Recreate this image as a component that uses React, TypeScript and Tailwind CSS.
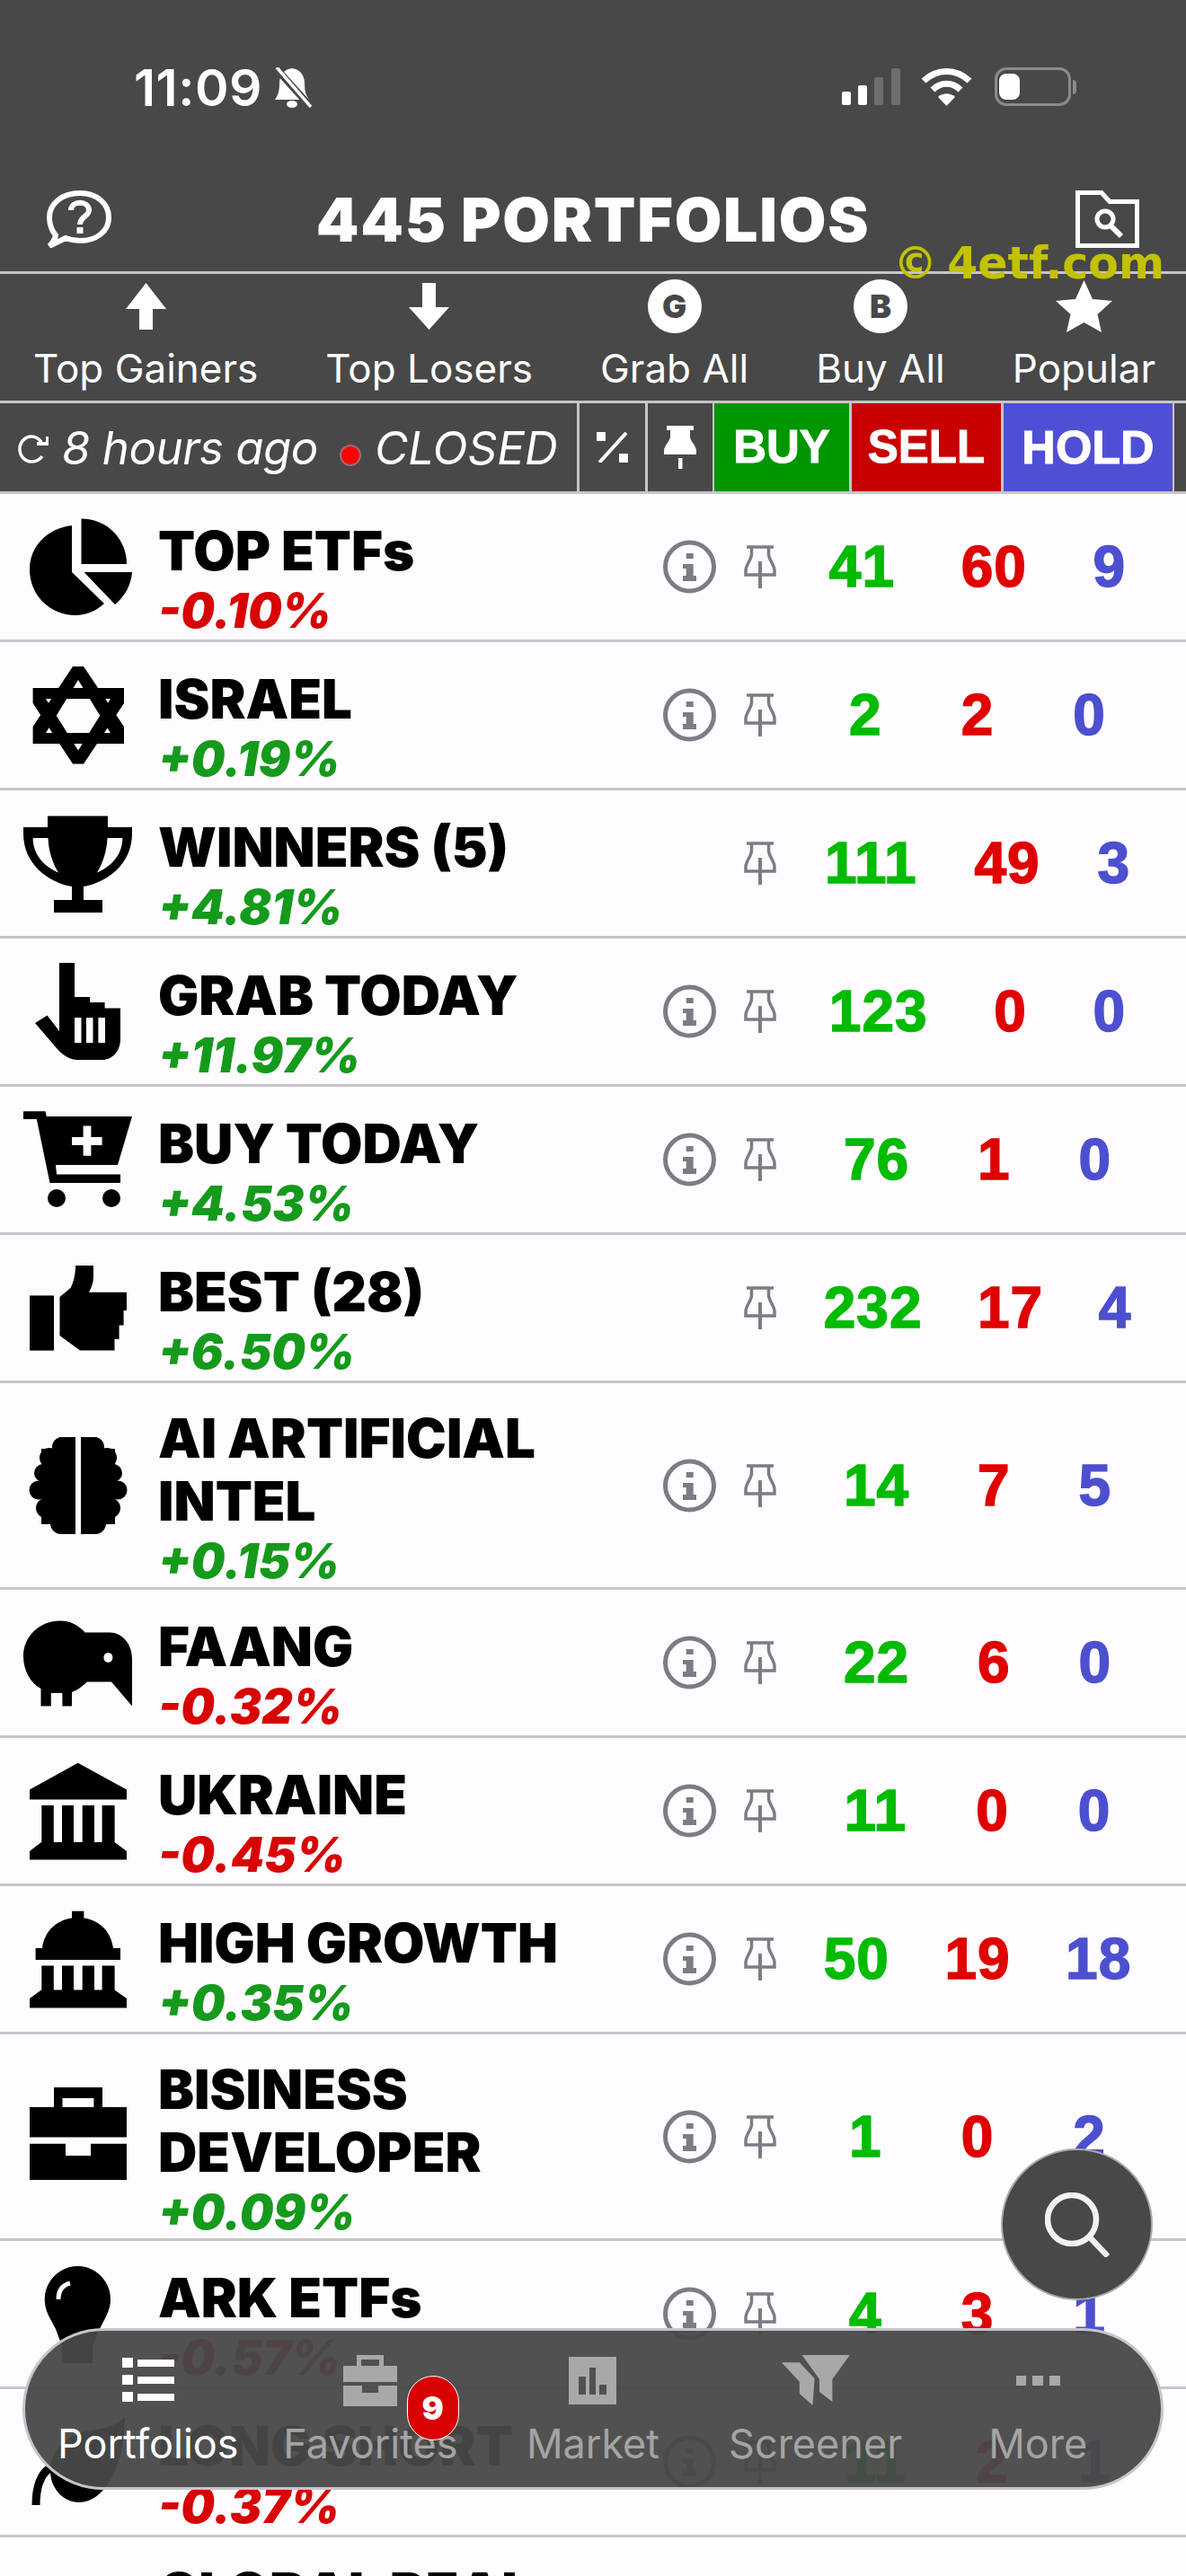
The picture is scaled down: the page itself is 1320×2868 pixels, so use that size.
import type { ReactNode } from "react";

type Row = {
  title: string;
  pct: string;
  icon: string;
  info?: boolean;
  buy: string;
  sell: string;
  hold: string;
  tall?: boolean;
};

const rows: Row[] = [
  { title: "TOP ETFs", pct: "-0.10%", icon: "pie", info: true, buy: "41", sell: "60", hold: "9" },
  { title: "ISRAEL", pct: "+0.19%", icon: "star", info: true, buy: "2", sell: "2", hold: "0" },
  { title: "WINNERS (5)", pct: "+4.81%", icon: "trophy", buy: "111", sell: "49", hold: "3" },
  { title: "GRAB TODAY", pct: "+11.97%", icon: "hand", info: true, buy: "123", sell: "0", hold: "0" },
  { title: "BUY TODAY", pct: "+4.53%", icon: "cart", info: true, buy: "76", sell: "1", hold: "0" },
  { title: "BEST (28)", pct: "+6.50%", icon: "thumb", buy: "232", sell: "17", hold: "4" },
  { title: "AI ARTIFICIAL INTEL", pct: "+0.15%", icon: "brain", info: true, buy: "14", sell: "7", hold: "5", tall: true },
  { title: "FAANG", pct: "-0.32%", icon: "kiwi", info: true, buy: "22", sell: "6", hold: "0" },
  { title: "UKRAINE", pct: "-0.45%", icon: "bank", info: true, buy: "11", sell: "0", hold: "0" },
  { title: "HIGH GROWTH", pct: "+0.35%", icon: "capitol", info: true, buy: "50", sell: "19", hold: "18" },
  { title: "BISINESS DEVELOPER", pct: "+0.09%", icon: "case", info: true, buy: "1", sell: "0", hold: "2", tall: true },
  { title: "ARK ETFs", pct: "-0.57%", icon: "balloon", info: true, buy: "4", sell: "3", hold: "1" },
  { title: "LONG SHORT", pct: "-0.37%", icon: "blob", info: true, buy: "11", sell: "2", hold: "1" },
  { title: "GLOBAL REAL ESTATE", pct: "+0.21%", icon: "none", info: true, buy: "9", sell: "3", hold: "1", tall: true },
];

function Pillars({ y, h }: { y: number; h: number }) {
  return (
    <>
      <rect x="20.3" y={y} width="13.5" height={h} />
      <rect x="43" y={y} width="13" height={h} />
      <rect x="65.7" y={y} width="13.3" height={h} />
      <rect x="87.6" y={y} width="14" height={h} />
    </>
  );
}

const icons: Record<string, ReactNode> = {
  pie: (
    <>
      <path d="M54 9C27 12 7 32 7 58C7 87 30 109 58 109C70 109 81 104 90 96L54 61Z" />
      <path d="M64.5 1.5C93 1.5 115 24 115 52L64.5 52Z" />
      <path d="M67.5 61L121 61C120 75 113 88 102 97Z" />
    </>
  ),
  star: (
    <>
      <path
        fillRule="evenodd"
        d="M55 1H67L112 68V87H10.6V68ZM61 16L25 75H97Z"
      />
      <path
        fillRule="evenodd"
        d="M55 109.5H67L112 42V25H10.6V42ZM61 94.5L25 37H97Z"
      />
    </>
  ),
  trophy: (
    <path
      fillRule="evenodd"
      d="M0 15H27V2.6H94V15H121V22C121 55 95 76 67 81V96H88V110H34V96H54V81C26 76 0 55 0 22ZM10.6 27C11 47 24 59 39 65.5C33 56 28 42 27.5 27ZM110.4 27H93.5C93 42 88 56 82 65.5C97 59 110 47 110.4 27Z"
    />
  ),
  hand: (
    <path
      fillRule="evenodd"
      d="M40 1H57V39H74V45H90.6V51.5H108V86C108 100 98 109 88 109H60C48 109 39 99 31 89L13 68L26.6 59.6L40 77ZM57 62V90H64.5V62ZM70 62V90H77.5V62ZM83.4 62V90H91V62Z"
    />
  ),
  cart: (
    <>
      <path
        fillRule="evenodd"
        d="M0 1.3H24.5L25.8 7H121L105 61H36L37 71.6H108V81H29.5L14.8 10H0ZM66.6 17.6V30H54V39H66.6V50.7H75.4V39H87.6V30H75.4V17.6Z"
      />
      <circle cx="37" cy="98" r="10" />
      <circle cx="98" cy="98" r="10" />
    </>
  ),
  thumb: (
    <>
      <rect x="7" y="41.4" width="27" height="61.2" />
      <path d="M40.5 43L52.7 32.7C56 26 58 18 58 8H78V20C78 27 76 32 73 37.8H115V58H111.6V74.5H106.6V90H101.5V102.6H63L40.5 86Z" />
    </>
  ),
  brain: (
    <>
      {["matrix(1 0 0 1 0 0)", "matrix(-1 0 0 1 122 0)"].map((t) => (
        <g key={t} transform={t}>
          <rect x="20" y="14" width="38" height="84" />
          <rect x="40" y="1" width="18" height="108" />
          <circle cx="43" cy="12" r="11" />
          <circle cx="29" cy="24" r="11" />
          <circle cx="22" cy="41" r="10" />
          <circle cx="17" cy="60" r="10.5" />
          <circle cx="25" cy="80" r="11" />
          <circle cx="42" cy="97" r="12" />
        </g>
      ))}
    </>
  ),
  kiwi: (
    <>
      <path d="M41 8.6C52 8.6 60 13 68.7 21.4H96C110 21.4 121 34 121 51V103.5L98 76.5H70.8C66 81 60 86 54 88V103.5H43.4V89H30.8V103.5H19.5V84C8 78 0 64 0 48C0 26 18 8.6 41 8.6Z" />
      <ellipse cx="94.4" cy="49.4" rx="5" ry="5.5" fill="#fefcff" />
    </>
  ),
  bank: (
    <>
      <path d="M60.7 1.8L115 31.4V42.6H7V31.4Z" />
      <Pillars y={49} h={42} />
      <path d="M20 90H101.5L115 100V109.4H7V100Z" />
    </>
  ),
  capitol: (
    <>
      <path d="M54 1.8H67.4V9.5C86 12 98 26 100 43H108V56H13.6V43H21C23 26 35 12 54 9.5Z" />
      <Pillars y={62.5} h={28} />
      <path d="M20 89.5H101.5L115 99V109.5H7V99Z" />
    </>
  ),
  case: (
    <path
      fillRule="evenodd"
      d="M34 0H88V22H115V55.5H7V22H34ZM43.5 12V22H78.4V12ZM7 62.8H47V76H75V62.8H115V103H7Z"
    />
  ),
  balloon: (
    <>
      <path d="M60.5 2C80 2 97 18 97 39C97 52 90 61 85 72L77 91H43L36 72C30 60 23.7 52 23.7 39C23.7 18 41 2 60.5 2Z" />
      <rect x="43" y="80" width="34" height="30" />
      <path d="M39 39C39 29 44 23 52 21" fill="none" stroke="#fefcff" strokeWidth="5" />
    </>
  ),
  blob: (
    <>
      <path d="M113 6C96 18 85 18 75 20C45 24 30 45 30 65C30 85 45 100 62 100C90 100 113 60 113 6Z" />
      <path d="M29 62C18 70 14 85 14 103" fill="none" stroke="#000" strokeWidth="9" />
    </>
  ),
  none: null,
};

function InfoIcon() {
  return (
    <svg viewBox="0 0 59 60" className="h-[60px] w-[59px]" fill="#7f7b85">
      <circle cx="29.5" cy="30" r="27" fill="none" stroke="#7f7b85" strokeWidth="5" />
      <rect x="25.7" y="15" width="8" height="6" />
      <path d="M22 27H33.7V40H37V46H22V40H25.7V32H22Z" />
    </svg>
  );
}

function PinIcon() {
  return (
    <svg viewBox="0 0 36 48" className="h-[48px] w-[36px]" fill="none" stroke="#7f7b85" strokeWidth="3.5">
      <path d="M3 2H33" />
      <path d="M8.5 3V10C8.5 16 2 22 2 28V33H34V28C34 22 27.5 16 27.5 10V3" />
      <path d="M18 18V48" strokeWidth="4" />
    </svg>
  );
}

function SolidPin() {
  return (
    <svg viewBox="0 0 36 48" className="h-[48px] w-[36px]" fill="#fff">
      <rect x="3" y="0" width="30" height="5" />
      <path d="M7 5H29V12C29 17 36 22 36 28V32H0V28C0 22 7 17 7 12Z" />
      <rect x="16" y="36" width="4.5" height="12" />
    </svg>
  );
}

function ListRow({ row }: { row: Row }) {
  const up = row.pct.startsWith("+");
  // the three counts spread out a little more when they hold many digits
  const digits = row.buy.length + row.sell.length + row.hold.length;
  return (
    <div
      className={`flex shrink-0 items-center border-b-[3px] border-[#c8c4cc] pl-[26px] pr-[30px] ${
        row.tall ? "h-[230px]" : "h-[165px]"
      }`}
    >
      <svg viewBox="0 0 122 110" className="h-[110px] w-[122px] shrink-0" fill="#000">
        {icons[row.icon]}
      </svg>
      <div
        className={`ml-[28px] flex h-full min-w-0 flex-1 flex-col justify-end font-[Inter,sans-serif] font-black ${
          row.tall ? "mb-[-6px]" : ""
        }`}
      >
        <div className="text-[60px] leading-[70px] text-black">{row.title}</div>
        <div className={`text-[53px] leading-[64px] italic ${up ? "text-[#159a1c]" : "text-[#d80404]"}`}>{row.pct}</div>
      </div>
      <div className="ml-2 h-[60px] w-[59px] shrink-0">{row.info && <InfoIcon />}</div>
      <div className="ml-[31px] shrink-0">
        <PinIcon />
      </div>
      <div className="ml-[22px] flex w-[404px] shrink-0 justify-center">
        <div
          className="flex items-center justify-around font-['Liberation_Sans',sans-serif] text-[64px] leading-none font-bold tracking-[1px] [-webkit-text-stroke:1.5px_currentColor]"
          style={{ width: digits >= 5 ? 404 : 374 }}
        >
          <span className="text-[#00bb00]">{row.buy}</span>
          <span className="text-[#e00000]">{row.sell}</span>
          <span className="text-[#4c50d0]">{row.hold}</span>
        </div>
      </div>
    </div>
  );
}

function Tool({ icon, label }: { icon: ReactNode; label: string }) {
  return (
    <div className="flex flex-col items-center">
      <div className="flex h-[60px] items-center justify-center">{icon}</div>
      <div className="mt-[11px] text-[44px] leading-[56px] whitespace-nowrap text-white">{label}</div>
    </div>
  );
}

function NavItem({ icon, label, active }: { icon: ReactNode; label: string; active?: boolean }) {
  return (
    <div className="flex flex-col items-center">
      <div className="flex h-[60px] items-center justify-center">{icon}</div>
      <div className={`mt-[13px] text-[45px] leading-[56px] ${active ? "text-white" : "text-[#a4a4a4]"}`}>{label}</div>
    </div>
  );
}

export default function App() {
  return (
    <div className="relative flex h-[2868px] w-[1320px] flex-col overflow-hidden bg-[#fefcff] font-[Inter,sans-serif]">
      {/* dark header */}
      <div className="bg-[#484848] text-white">
        <div className="flex h-[120px] items-start justify-between pt-[75px] pr-[122px] pl-[149px]">
          <div className="flex items-center">
            <span className="text-[57px] leading-[45px] font-semibold tracking-[0.5px]">11:09</span>
            <svg viewBox="0 0 44 45" className="ml-[11px] h-[45px] w-[44px]" fill="#fff">
              <path d="M22 1C31 2 36 9 36 18C36 28 38 31 41 36H3C6 31 8 28 8 18C8 9 13 2 22 1Z" />
              <ellipse cx="22" cy="41" rx="6" ry="4" />
              <path d="M4 1L42 43" stroke="#484848" strokeWidth="8" />
              <path d="M5 0L43 44" stroke="#fff" strokeWidth="3.5" />
            </svg>
          </div>
          <div className="flex items-center">
            <svg viewBox="0 0 65 41" className="h-[41px] w-[65px]">
              <rect x="0" y="26" width="10" height="15" rx="2" fill="#fff" />
              <rect x="18" y="19" width="10" height="22" rx="2" fill="#fff" />
              <rect x="36" y="10" width="10" height="31" rx="2" fill="#6e6e6e" />
              <rect x="55" y="0" width="10" height="41" rx="2" fill="#6e6e6e" />
            </svg>
            <svg viewBox="0 0 57 42" className="ml-[23px] h-[42px] w-[57px]" fill="none" stroke="#fff" strokeWidth="7">
              <path d="M3 14C18 0 39 0 54 14" />
              <path d="M13 24C22 15 35 15 44 24" />
              <path d="M28.5 42L19 32C24 27 33 27 38 32Z" fill="#fff" stroke="none" />
            </svg>
            <div className="ml-[25px] flex items-center">
              <div className="flex h-[43px] w-[85px] items-center rounded-[13px] border-[3px] border-[#8c8c8c] pl-[2px]">
                <div className="h-[29px] w-[23px] rounded-[8px] bg-white" />
              </div>
              <div className="ml-[2px] h-[16px] w-[4px] rounded-r-full bg-[#8c8c8c]" />
            </div>
          </div>
        </div>

        <div className="relative flex items-center justify-between border-b-[3px] border-[#c8c4cc] pt-[92px] pr-[52px] pb-[26px] pl-[52px]">
          <svg viewBox="0 0 72 64" className="h-[64px] w-[72px]" fill="none" stroke="#fff" strokeWidth="6">
            <path d="M10 50C5 44 3 37 3 30C3 14 18 3 37 3C55 3 69 14 69 30C69 46 55 56 37 56C31 56 26 55 21 53L3 62C7 58 9 54 10 50Z" />
            <path d="M27 22C27 11 47 11 47 22C47 29 37 29 37 38" />
            <path d="M37 41V48" strokeWidth="7" />
          </svg>
          <div className="absolute top-[92px] left-0 w-full text-center text-[68px] leading-[64px] font-black tracking-[1.7px]">
            445 PORTFOLIOS
          </div>
          <svg viewBox="0 0 71 64" className="h-[64px] w-[71px]" fill="none" stroke="#fff" strokeWidth="5">
            <path d="M2.5 2.5H29L38 12.5H68.5V61.5H2.5Z" />
            <circle cx="33" cy="32" r="9" />
            <path d="M39 39L51 51" strokeWidth="6" />
          </svg>
          {/* watermark sits over the divider */}
          <div className="absolute top-[152px] right-[24px] z-10 font-['DejaVu_Sans',sans-serif] text-[49px] leading-[44px] font-bold whitespace-nowrap text-[#c2c200] [word-spacing:-6px]">
            © 4etf.com
          </div>
        </div>

        <div className="flex h-[144px] items-start justify-between border-b-[3px] border-[#c8c4cc] pt-[6px] pr-[34px] pl-[37px]">
          <Tool
            label="Top Gainers"
            icon={
              <svg viewBox="0 0 45 52" className="h-[52px] w-[45px]" fill="#fff">
                <path d="M22.5 0L45 29H30V52H15V29H0Z" />
              </svg>
            }
          />
          <Tool
            label="Top Losers"
            icon={
              <svg viewBox="0 0 45 52" className="h-[52px] w-[45px]" fill="#fff">
                <path d="M15 0H30V27H45L22.5 52L0 27H15Z" />
              </svg>
            }
          />
          <Tool
            label="Grab All"
            icon={
              <div className="flex h-[60px] w-[60px] items-center justify-center rounded-full bg-white text-[36px] font-black text-[#484848]">
                G
              </div>
            }
          />
          <Tool
            label="Buy All"
            icon={
              <div className="flex h-[60px] w-[60px] items-center justify-center rounded-full bg-white text-[36px] font-black text-[#484848]">
                B
              </div>
            }
          />
          <Tool
            label="Popular"
            icon={
              <svg viewBox="0 0 63 58" className="h-[58px] w-[63px]" fill="#fff">
                <path d="M31.5 0L41 21L63 23L46.5 38L51 58L31.5 47L12 58L16.5 38L0 23L22 21Z" />
              </svg>
            }
          />
        </div>

        <div className="flex h-[101px] items-stretch border-b-[3px] border-[#c8c4cc]">
          <div className="flex min-w-0 flex-1 items-center pl-[20px] text-[51px] leading-none italic">
            <svg viewBox="0 0 34 32" className="mt-[4px] h-[32px] w-[34px] shrink-0" fill="none" stroke="#fff" strokeWidth="3.5">
              <path d="M26 8C23 4 19 2 15 2C8 2 2 8 2 16C2 24 8 30 15 30C20 30 24 28 27 24" />
              <path d="M21 10H33V2" strokeWidth="4" />
            </svg>
            <span className="ml-[15px] tracking-[-0.5px] whitespace-nowrap">8 hours ago</span>
            <span className="mt-[18px] ml-[24px] h-[24px] w-[24px] shrink-0 rounded-full border-2 border-[#a06a6a] bg-[#ff0000]" />
            <span className="ml-[15px]">CLOSED</span>
          </div>
          <div className="flex w-[76px] items-center justify-center border-l-[3px] border-[#c8c4cc]">
            <svg viewBox="0 0 36 34" className="h-[34px] w-[36px]" fill="#fff">
              <rect x="0" y="0" width="10" height="10" />
              <rect x="25" y="24" width="10" height="10" />
              <path d="M33 1L3 34" stroke="#fff" strokeWidth="4" />
            </svg>
          </div>
          <div className="flex w-[75px] items-center justify-center border-l-[3px] border-[#c8c4cc]">
            <SolidPin />
          </div>
          <div className="flex w-[152px] items-center justify-center border-l-[2px] border-[#c8c4cc] bg-[#009600] font-['Liberation_Sans',sans-serif] text-[51px] font-bold [-webkit-text-stroke:1px_currentColor]">
            BUY
          </div>
          <div className="flex w-[169px] items-center justify-center border-l-[3px] border-[#c8c4cc] bg-[#c80000] font-['Liberation_Sans',sans-serif] text-[51px] font-bold [-webkit-text-stroke:1px_currentColor]">
            SELL
          </div>
          <div className="flex w-[191px] items-center justify-center border-l-[3px] border-[#c8c4cc] bg-[#4f4fd6] font-['Liberation_Sans',sans-serif] text-[52px] font-bold [-webkit-text-stroke:1px_currentColor]">
            HOLD
          </div>
          <div className="w-[15px] border-l-[2px] border-[#c8c4cc]" />
        </div>
      </div>

      {rows.map((r) => (
        <ListRow key={r.title} row={r} />
      ))}

      {/* floating search button */}
      <div className="absolute top-[2392px] left-[1114px] flex h-[169px] w-[169px] items-center justify-center rounded-full border-2 border-[#a8a8a8] bg-[#484848]">
        <svg viewBox="0 0 72 72" className="h-[72px] w-[72px]" fill="none" stroke="#f2f2f2" strokeWidth="6.5">
          <circle cx="30" cy="30" r="27" />
          <path d="M50 50L70 71" />
        </svg>
      </div>

      {/* floating tab bar */}
      <div className="absolute top-[2592px] left-[25px] grid h-[180px] w-[1270px] grid-cols-5 rounded-full border-[3px] border-[#c8c4cc] bg-[#484848]/95 px-[13px] pt-[25px]">
        <NavItem
          active
          label="Portfolios"
          icon={
            <svg viewBox="0 0 58 50" className="h-[50px] w-[58px]" fill="#fff">
              <rect x="0" y="0" width="12" height="11" />
              <rect x="17" y="2" width="41" height="8" />
              <rect x="0" y="19" width="12" height="11" />
              <rect x="17" y="21" width="41" height="8" />
              <rect x="0" y="38" width="12" height="11" />
              <rect x="17" y="40" width="41" height="8" />
            </svg>
          }
        />
        <div className="relative">
          <NavItem
            label="Favorites"
            icon={
              <svg viewBox="0 0 60 57" className="h-[57px] w-[60px]" fill="#a8a8a8">
                <path
                  fillRule="evenodd"
                  d="M15 0H45V12H60V30H0V12H15ZM20 5V12H40V5ZM0 34H21V42H39V34H60V57H0Z"
                />
              </svg>
            }
          />
          <div className="absolute top-[25px] left-[164px] flex h-[72px] w-[58px] items-center justify-center rounded-full border border-white bg-[#d80000] text-[36px] font-black text-white">
            9
          </div>
        </div>
        <NavItem
          label="Market"
          icon={
            <svg viewBox="0 0 53 53" className="h-[53px] w-[53px]" fill="#a8a8a8">
              <path
                fillRule="evenodd"
                d="M0 0H53V53H0ZM11 22V42H19V22ZM23 12V42H30V12ZM34 31V42H42V31Z"
              />
            </svg>
          }
        />
        <NavItem
          label="Screener"
          icon={
            <svg viewBox="0 0 76 56" className="h-[56px] w-[76px]" fill="#a8a8a8">
              <path d="M22.7 0H75.8L56.4 27V52L42 41V27Z" />
              <path d="M0 8.3H19.8L36.6 26L34.5 56L19.8 43V29.7Z" />
            </svg>
          }
        />
        <NavItem
          label="More"
          icon={
            <svg viewBox="0 0 49 11" className="h-[11px] w-[49px]" fill="#a8a8a8">
              <rect x="0" y="0" width="11" height="11" />
              <rect x="18" y="0" width="12" height="11" />
              <rect x="37" y="0" width="12" height="11" />
            </svg>
          }
        />
      </div>
    </div>
  );
}
